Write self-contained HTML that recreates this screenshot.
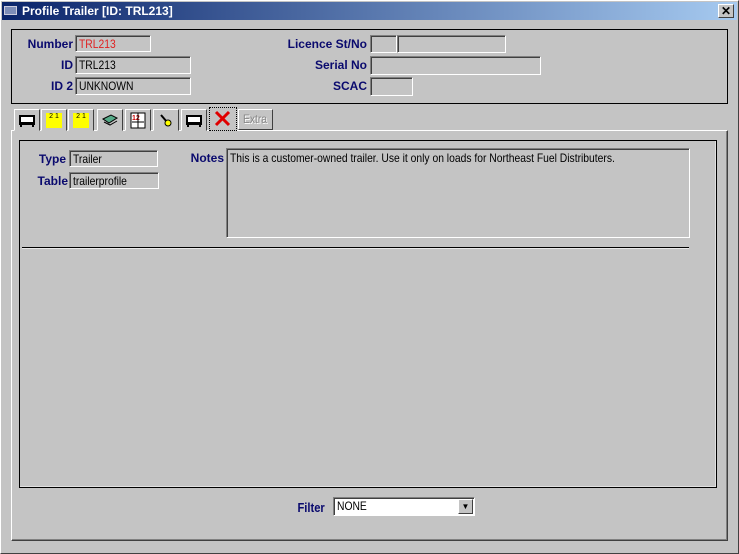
<!DOCTYPE html>
<html><head><meta charset="utf-8"><style>
*{margin:0;padding:0;box-sizing:border-box}
body{width:739px;height:554px;background:#c4c4c4;position:relative;overflow:hidden;font-family:"Liberation Sans",sans-serif;font-size:12px}
.a{position:absolute}
.n{display:inline-block;transform:scaleX(.86);transform-origin:0 0;white-space:nowrap}
.win{left:0;top:0;width:739px;height:554px;border:1px solid #fff;border-right-color:#404040;border-bottom-color:#404040}
.title{left:2px;top:2px;width:735px;height:18px;background:linear-gradient(90deg,#0a246a,#a6caf0);color:#fff;font-weight:bold;font-size:12px;line-height:18px;padding-left:20px}
.lbl{color:#0a0a6e;font-weight:bold;font-size:12px;text-align:right}
.in{border:1px solid;border-color:#808080 #fff #fff #808080;box-shadow:inset 1px 1px 0 #404040;background:#c4c4c4;padding:1px 0 0 3px;line-height:14px;white-space:nowrap;overflow:hidden}
.tab{top:109px;width:26px;height:22px;border:1px solid;border-color:#fff #404040 #c4c4c4 #fff;background:#c4c4c4}
</style></head><body>
<div class="a win"></div>
<div class="a title">Profile Trailer [ID: TRL213]</div>
<div class="a" style="left:4px;top:6px;width:13px;height:9px;background:#7d8db8;border:1px solid #ccd"></div>
<div class="a" style="left:718px;top:4px;width:16px;height:14px;background:#c4c4c4;border:1px solid;border-color:#fff #404040 #404040 #fff;font:bold 12px 'Liberation Sans';text-align:center;line-height:12px">✕</div>

<div class="a" style="left:11px;top:29px;width:717px;height:75px;border:1px solid #000"></div>
<div class="a lbl" style="left:20px;top:37px;width:53px">Number</div>
<div class="a in" style="left:75px;top:35px;width:76px;height:17px;color:#e02020"><span class="n">TRL213</span></div>
<div class="a lbl" style="left:20px;top:58px;width:53px">ID</div>
<div class="a in" style="left:75px;top:56px;width:116px;height:18px"><span class="n">TRL213</span></div>
<div class="a lbl" style="left:20px;top:79px;width:53px">ID 2</div>
<div class="a in" style="left:75px;top:77px;width:116px;height:18px"><span class="n">UNKNOWN</span></div>
<div class="a lbl" style="left:260px;top:37px;width:107px">Licence St/No</div>
<div class="a in" style="left:370px;top:35px;width:27px;height:18px"></div>
<div class="a in" style="left:397px;top:35px;width:109px;height:18px"></div>
<div class="a lbl" style="left:260px;top:58px;width:107px">Serial No</div>
<div class="a in" style="left:370px;top:56px;width:171px;height:19px"></div>
<div class="a lbl" style="left:260px;top:79px;width:107px">SCAC</div>
<div class="a in" style="left:370px;top:77px;width:43px;height:19px"></div>

<div class="a" style="left:11px;top:130px;width:717px;height:411px;border:1px solid;border-color:#fff #404040 #404040 #fff;box-shadow:inset -1px -1px 0 #808080"></div>
<div class="a tab" style="left:14px"><svg width="24" height="20"><rect x="4" y="5" width="16" height="10" fill="#000"/><rect x="6" y="7" width="12" height="5" fill="#fff"/><rect x="5" y="15" width="2" height="2"/><rect x="17" y="15" width="2" height="2"/></svg></div>
<div class="a tab" style="left:41px"><div class="a" style="left:4px;top:3px;width:16px;height:15px;background:#ffff00;font-size:7px;text-align:center">2 1</div></div>
<div class="a tab" style="left:68px"><div class="a" style="left:4px;top:3px;width:16px;height:15px;background:#ffff00;font-size:7px;text-align:center">2 1</div></div>
<div class="a tab" style="left:97px"><svg width="24" height="20"><path d="M5 9l8-4 6 3-8 5z" fill="#5a8" stroke="#000"/><path d="M6 12l6 3 7-4" fill="none" stroke="#000"/></svg></div>
<div class="a tab" style="left:125px"><svg width="24" height="20"><rect x="5" y="3" width="14" height="15" fill="#fff" stroke="#000"/><text x="6" y="10" font-size="7" fill="#c00" font-weight="bold">12</text><path d="M6 12h12M12 3v15" stroke="#000"/></svg></div>
<div class="a tab" style="left:153px"><svg width="24" height="20"><path d="M7 5l6 7" stroke="#000" stroke-width="2"/><circle cx="14" cy="13" r="3" fill="#ff0" stroke="#000"/></svg></div>
<div class="a tab" style="left:181px"><svg width="24" height="20"><rect x="4" y="5" width="16" height="10" fill="#000"/><rect x="6" y="7" width="12" height="5" fill="#fff"/><rect x="5" y="15" width="2" height="2"/><rect x="17" y="15" width="2" height="2"/></svg></div>
<div class="a" style="left:209px;top:107px;width:28px;height:24px;border:1px dotted #000;background:#c4c4c4"><svg width="26" height="22"><path d="M6 4l13 13M19 4L6 17" stroke="#e00000" stroke-width="3"/></svg></div>
<div class="a" style="left:238px;top:109px;width:35px;height:21px;border:1px solid;border-color:#fff #404040 #404040 #fff;color:#888;text-shadow:1px 1px 0 #fff;text-align:center;line-height:19px"><span class="n" style="transform-origin:50% 0">Extra</span></div>

<div class="a" style="left:19px;top:140px;width:698px;height:348px;border:1px solid #000;box-shadow:inset -1px -1px 0 #e0e0e0"></div>
<div class="a lbl" style="left:25px;top:152px;width:41px">Type</div>
<div class="a in" style="left:69px;top:150px;width:89px;height:17px"><span class="n">Trailer</span></div>
<div class="a lbl" style="left:25px;top:174px;width:43px">Table</div>
<div class="a in" style="left:69px;top:172px;width:90px;height:17px"><span class="n">trailerprofile</span></div>
<div class="a lbl" style="left:180px;top:151px;width:44px">Notes</div>
<div class="a in" style="left:226px;top:148px;width:464px;height:90px;padding-top:2px"><span class="n">This is a customer-owned trailer. Use it only on loads for Northeast Fuel Distributers.</span></div>
<div class="a" style="left:22px;top:247px;width:667px;height:2px;border-top:1px solid #000;border-bottom:1px solid #e8e8e8"></div>

<div class="a lbl" style="left:280px;top:500px;width:45px;font-size:13px"><span class="n" style="transform-origin:100% 0">Filter</span></div>
<div class="a" style="left:333px;top:497px;width:142px;height:19px;background:#fff;border:1px solid;border-color:#808080 #fff #fff #808080;box-shadow:inset 1px 1px 0 #404040;padding:1px 0 0 3px"><span class="n">NONE</span></div>
<div class="a" style="left:458px;top:499px;width:15px;height:15px;background:#c4c4c4;border:1px solid;border-color:#fff #404040 #404040 #fff;font-size:8px;text-align:center;line-height:13px">▼</div>
</body></html>
